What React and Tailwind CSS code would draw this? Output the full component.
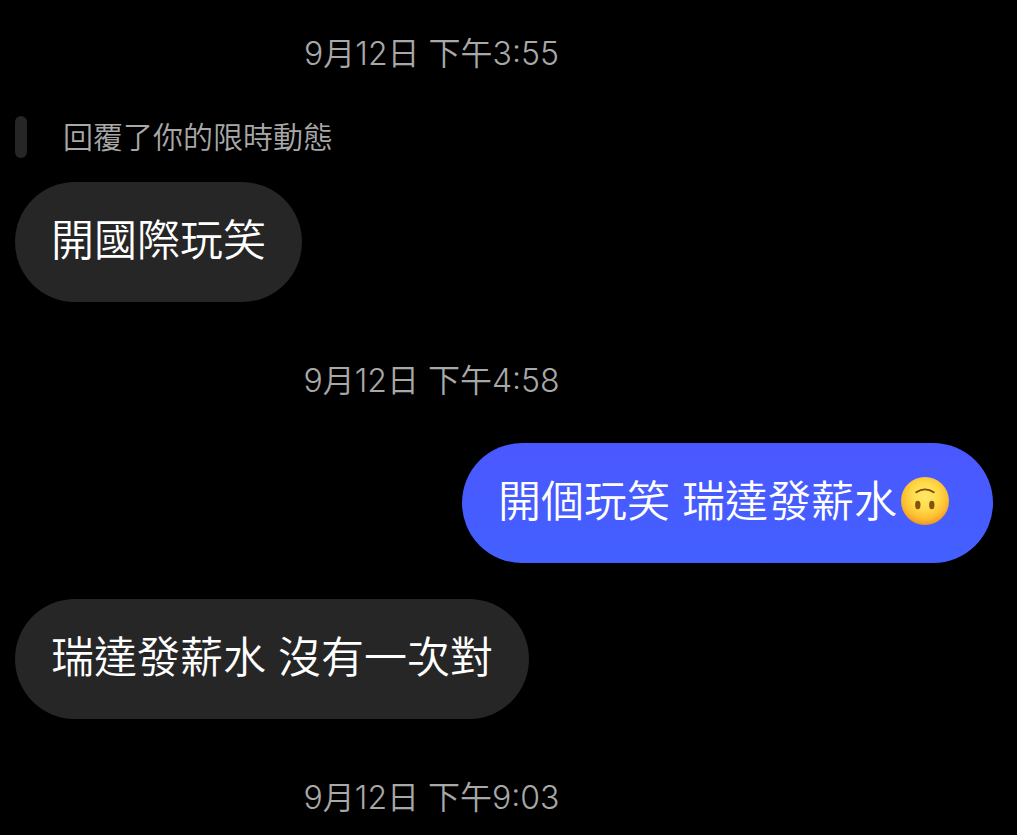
import React from 'react'
import clsx from 'clsx'

const THREAD = [
  { id: 1, kind: 'time', text: '9月12日 下午3:55' },
  { id: 2, kind: 'reply', text: '回覆了你的限時動態' },
  { id: 3, kind: 'message', from: 'them', text: '開國際玩笑' },
  { id: 4, kind: 'time', text: '9月12日 下午4:58' },
  { id: 5, kind: 'message', from: 'me', text: '開個玩笑 瑞達發薪水', emoji: true },
  { id: 6, kind: 'message', from: 'them', text: '瑞達發薪水 沒有一次對' },
  { id: 7, kind: 'time', text: '9月12日 下午9:03' }
]

function UpsideDownFace() {
  return (
    <svg viewBox="0 0 48 48" className="w-12 h-12 ml-1 mr-2 flex-shrink-0" role="img" aria-label="🙃">
      <defs>
        <radialGradient id="face" cx="50%" cy="40%" r="62%">
          <stop offset="0%" stopColor="#ffe768" />
          <stop offset="45%" stopColor="#ffdb4a" />
          <stop offset="76%" stopColor="#fdbd30" />
          <stop offset="100%" stopColor="#ec901d" />
        </radialGradient>
      </defs>
      <circle cx="24" cy="24" r="24" fill="url(#face)" />
      <path d="M15.2 15.2 Q24 9.4 32.8 15.2" fill="none" stroke="#7a4a0c" strokeWidth="1.8" strokeLinecap="round" />
      <ellipse cx="16.8" cy="28" rx="2.7" ry="4.2" fill="#85530f" />
      <ellipse cx="30.8" cy="28" rx="2.7" ry="4.2" fill="#85530f" />
    </svg>
  )
}

function Timestamp({ text }) {
  return (
    <li className="pt-[59px] pb-[42px] pr-[145px] first:pt-[34px] last:pb-0 text-center text-[32px] leading-10 text-[#a8a8a8]">
      <time>{text}</time>
    </li>
  )
}

// Grey label above a message that answers a story
function StoryReply({ text }) {
  return (
    <li className="flex items-center gap-9 mb-6">
      <span className="w-3 h-[42px] rounded-full bg-[#262626]" />
      <span className="text-[30px] leading-10 text-[#a8a8a8]">{text}</span>
    </li>
  )
}

function Bubble({ from, text, emoji }) {
  const mine = from === 'me'
  return (
    <li className={clsx('flex', mine ? 'justify-end mb-9' : 'justify-start')}>
      <p
        className={clsx(
          'flex items-center rounded-[60px] px-9 pt-7 pb-8 text-[43px] leading-[60px] text-white',
          mine ? 'bg-linear-to-b from-[#4a58ff] to-[#4360ff]' : 'bg-[#262626]'
        )}
      >
        <span>{text}</span>
        {emoji && <UpsideDownFace />}
      </p>
    </li>
  )
}

export default function App() {
  return (
    <main className="min-h-screen bg-black pl-[15px] pr-6 font-[350] font-[Inter,'Noto_Sans_CJK_TC',sans-serif]" lang="zh-Hant">
      <ol>
        {THREAD.map(item => {
          if (item.kind === 'time') return <Timestamp key={item.id} text={item.text} />
          if (item.kind === 'reply') return <StoryReply key={item.id} text={item.text} />
          return <Bubble key={item.id} from={item.from} text={item.text} emoji={item.emoji} />
        })}
      </ol>
    </main>
  )
}
